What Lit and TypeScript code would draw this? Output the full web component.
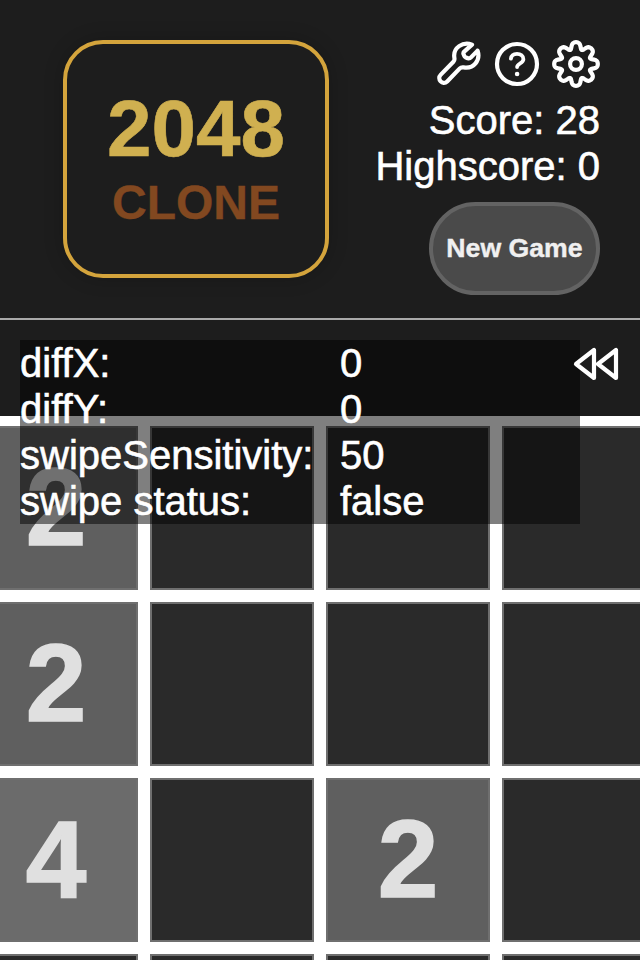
import { LitElement, html, css } from "lit";
import { customElement, property, state } from "lit/decorators.js";
import { classMap } from "lit/directives/class-map.js";

// Eight-lobed cog outline around the centre of a 48px box.
const cog =
  Array.from({ length: 192 }, (_, i) => {
    const t = (i / 192) * Math.PI * 2;
    const a = t + 0.045 * Math.sin(8 * t);
    const r = 18.5 + 3.3 * Math.tanh(1.1 * Math.cos(8 * t)) / Math.tanh(1.1);
    return `${i ? "L" : "M"}${(24 + r * Math.cos(a)).toFixed(2)} ${(24 + r * Math.sin(a)).toFixed(2)}`;
  }).join("") + "Z";

@customElement("game-tile")
class GameTile extends LitElement {
  @property({ type: Number }) value = 0;

  static styles = css`
    :host { display: block; }
    .tile {
      box-sizing: border-box;
      width: 164px;
      height: 164px;
      border: 2px solid #6f6f6f;
      background: #2a2a2a;
      color: #e0e0e0;
      display: flex;
      align-items: center;
      justify-content: center;
      padding-bottom: 2px;
      font: bold 109px/1 "Liberation Sans", Arial, sans-serif;
      -webkit-text-stroke: 1.5px #e0e0e0;
    }
    .v2 { background: #5f5f5f; }
    .v4 { background: #6b6b6b; }
  `;

  render() {
    return html`<div class=${classMap({ tile: true, v2: this.value === 2, v4: this.value === 4 })}>
      ${this.value || ""}
    </div>`;
  }
}

@customElement("app-root")
class AppRoot extends LitElement {
  @state() private score = 28;
  @state() private highscore = 0;
  @state() private cells = [2, 0, 0, 0, 2, 0, 0, 0, 4, 0, 2, 0, 0, 0, 0, 0];
  @state() private debug = [
    ["diffX:", "0"],
    ["diffY:", "0"],
    ["swipeSensitivity:", "50"],
    ["swipe status:", "false"],
  ];

  static styles = css`
    :host {
      display: block;
      position: relative;
      height: 960px;
      overflow: hidden;
      background: #fff;
      color: #fff;
      font: 40px/46px "Liberation Sans", Arial, sans-serif;
    }
    .header {
      box-sizing: border-box;
      height: 320px;
      padding: 40px 40px 0 63px;
      display: flex;
      justify-content: space-between;
      align-items: flex-start;
      background: #1d1d1d;
      border-bottom: 2px solid #a9a9a9;
    }
    .logo {
      box-sizing: border-box;
      width: 266px;
      height: 238px;
      border: 4px solid #d4a43c;
      border-radius: 40px;
      box-shadow: 0 0 20px rgba(0, 0, 0, 0.2);
      display: flex;
      flex-direction: column;
      align-items: center;
      padding-top: 39px;
      font-weight: bold;
    }
    .number {
      font-size: 80px;
      line-height: 92px;
      color: #d0b050;
      -webkit-text-stroke: 0.6px #d0b050;
    }
    .clone {
      font-size: 48px;
      line-height: 56px;
      color: #824820;
      -webkit-text-stroke: 0.4px #824820;
    }
    .side {
      display: flex;
      flex-direction: column;
      align-items: flex-end;
    }
    .icons { display: flex; gap: 11px; margin-bottom: 9px; }
    svg {
      display: block;
      width: 48px;
      height: 48px;
      fill: none;
      stroke: #fff;
      stroke-width: 4.2;
      stroke-linecap: round;
      stroke-linejoin: round;
    }
    .thin { stroke-width: 3.8; }
    .dot { fill: #fff; stroke: none; }
    .line { -webkit-text-stroke: 0.6px #fff; white-space: nowrap; }
    .new-game {
      box-sizing: border-box;
      width: 171px;
      height: 93px;
      margin: 13px 0 0;
      padding: 0;
      border: 4px solid #636363;
      border-radius: 47px;
      background: #4a4a4a;
      color: #f0f0f0;
      font: bold 26.67px/1 "Liberation Sans", Arial, sans-serif;
      -webkit-text-stroke: 0.4px #f0f0f0;
    }
    .toolbar {
      box-sizing: border-box;
      height: 96px;
      padding: 20px;
      display: flex;
      justify-content: flex-end;
      align-items: flex-start;
      background: #1d1d1d;
    }
    .rewind { position: relative; z-index: 2; }
    .board {
      display: grid;
      grid-template-columns: repeat(4, 164px);
      gap: 12px;
      width: 692px;
      padding-top: 10px;
      margin-left: -26px;
    }
    .debug {
      position: absolute;
      top: 340px;
      left: 20px;
      width: 560px;
      display: grid;
      grid-template-columns: 320px 240px;
      background: rgba(0, 0, 0, 0.5);
      z-index: 1;
    }
  `;

  render() {
    return html`
      <div class="header">
        <div class="logo">
          <div class="number">2048</div>
          <div class="clone">CLONE</div>
        </div>
        <div class="side">
          <div class="icons">
            <svg viewBox="0 0 48 48">
              <path d="M38 4.6C29 1.2 18.6 7.6 20.4 18Q20.8 20.4 19.4 21.8L6.8 34.6C2.4 39 8.6 46 13.2 41.4L25.8 28.4Q27.2 27 29.6 27.4C39.6 29.2 46.8 20.4 43.6 10.6L37 17.4Q35.6 18.8 33.8 18.2L31.4 17.2Q30.6 16.8 30.2 15.8L29.4 13.8Q29.2 12.6 30.2 11.6Z" />
            </svg>
            <svg viewBox="0 0 48 48">
              <circle cx="24" cy="24" r="20" />
              <path class="thin" d="M17.9 18.7C18.3 15.6 20.8 13.8 24 13.8C27.6 13.8 30.4 16 30.4 19.2C30.4 23.2 24.1 23.7 24.1 27" />
              <circle class="dot" cx="24.1" cy="34" r="2.3" />
            </svg>
            <svg viewBox="0 0 48 48">
              <path d=${cog} />
              <circle cx="24" cy="24" r="5.9" />
            </svg>
          </div>
          <div class="line">Score: ${this.score}</div>
          <div class="line">Highscore: ${this.highscore}</div>
          <button class="new-game">New Game</button>
        </div>
      </div>
      <div class="toolbar">
        <svg class="rewind" viewBox="0 0 48 48">
          <path d="M4 24L22 10V38ZM26 24L44 10V38Z" />
        </svg>
      </div>
      <div class="board">
        ${this.cells.map((v) => html`<game-tile .value=${v}></game-tile>`)}
      </div>
      <div class="debug">
        ${this.debug.map(([k, v]) => html`<div class="line">${k}</div><div class="line">${v}</div>`)}
      </div>
    `;
  }
}
